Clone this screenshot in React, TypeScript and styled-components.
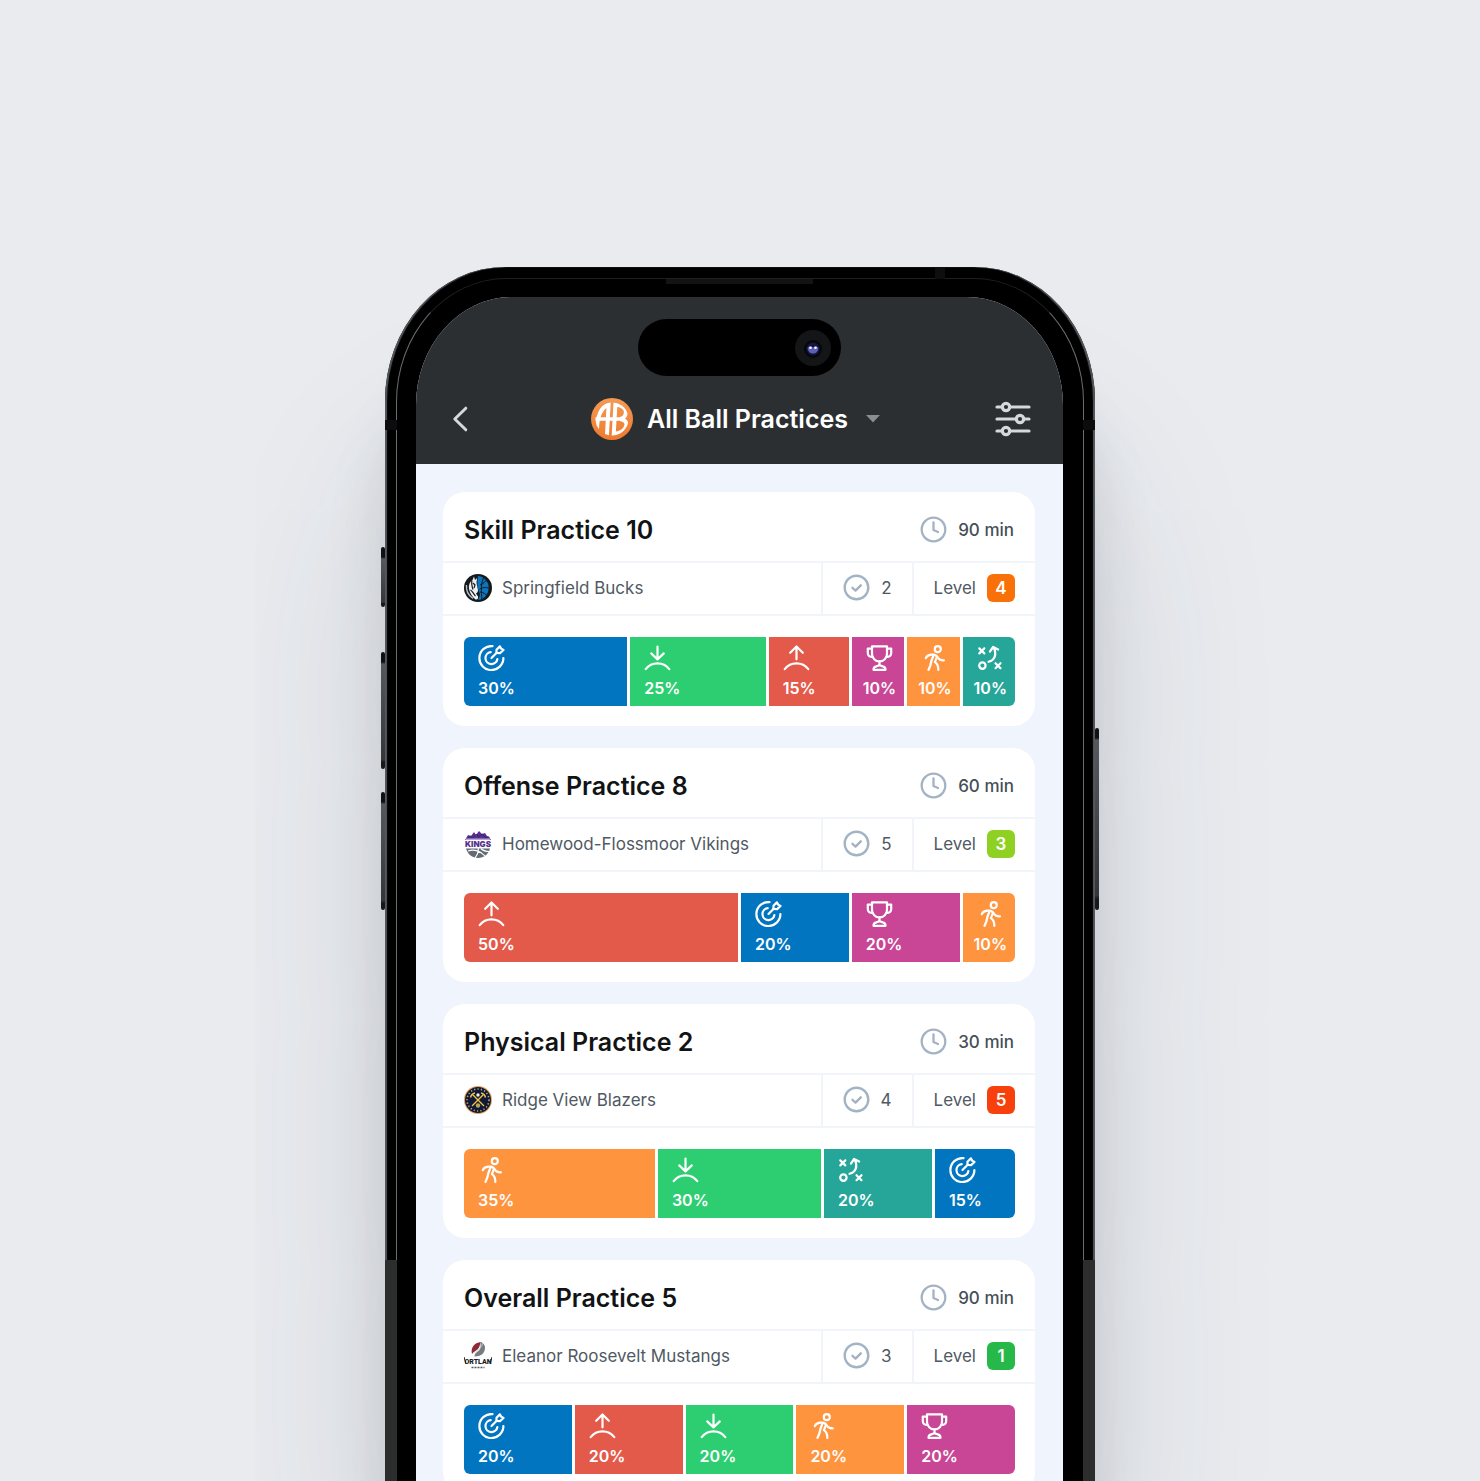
import React from "react";
import styled, { createGlobalStyle } from "styled-components";

const GlobalStyle = createGlobalStyle`
  *, *::before, *::after { box-sizing: border-box; }
  body {
    margin: 0;
    background: #e9ebef;
    font-family: Inter, Roboto, "Liberation Sans", sans-serif;
    -webkit-font-smoothing: antialiased;
  }
  h2, p, ul { margin: 0; padding: 0; }
`;

/* ---------- Device ---------- */

const Stage = styled.main`
  height: 100vh;
  overflow: hidden;
  display: flex;
  justify-content: center;
  align-items: flex-start;
  padding-top: 267px;
`;

const Phone = styled.div`
  position: relative;
  flex: 0 1 710px;
  padding: 30px 32px 300px 31px;
  background: #000;
  border-radius: 120px 120px 0 0 / 134px 134px 0 0;
  box-shadow:
    0 190px 190px rgba(40, 55, 70, 0.14),
    0 110px 60px -4px rgba(40, 50, 60, 0.17),
    inset 2px 0 1px #55585c,
    inset -2px 0 1px #55585c;

  &::before {
    content: "";
    position: absolute;
    inset: 11px 11px 0;
    border: 1px solid #6a6c70;
    border-top-color: #1f1f1f;
    border-bottom: 0;
    border-radius: 110px 110px 0 0 / 124px 124px 0 0;
  }
`;

const Rail = styled.span<{ $side: "left" | "right" }>`
  position: absolute;
  top: 993px;
  bottom: 0;
  ${(p) => p.$side}: 0;
  width: 12px;
  background: #2c2d2d;
`;

const Antenna = styled.span<{ $side: "left" | "right" }>`
  position: absolute;
  top: 153px;
  ${(p) => p.$side}: 0;
  width: 12px;
  height: 10px;
  background: #0c0c0c;
`;

const TopAntenna = styled.span`
  position: absolute;
  top: 0;
  right: 150px;
  width: 10px;
  height: 12px;
  background: #0e0e0e;
`;

const Speaker = styled.span`
  position: absolute;
  top: 12px;
  left: 281px;
  width: 147px;
  height: 5px;
  background: #131313;
`;

const SideKey = styled.span<{ $side: "left" | "right"; $top: number; $length: number }>`
  position: absolute;
  top: ${(p) => p.$top}px;
  ${(p) => p.$side}: -4px;
  width: 4px;
  height: ${(p) => p.$length}px;
  border-radius: 2px;
  background: linear-gradient(#111 0, #111 10px, #55595d 12px, #33373a 92%, #16181a 94%);
`;

const Screen = styled.div`
  position: relative;
  overflow: hidden;
  background: #f0f5fd;
  border-radius: 96px 96px 0 0 / 108px 108px 0 0;
`;

/* ---------- Header ---------- */

const Header = styled.header`
  display: flex;
  flex-direction: column;
  align-items: center;
  padding-top: 22px;
  background: #2b2f31;
`;

const Island = styled.div`
  display: flex;
  justify-content: flex-end;
  align-items: center;
  width: 203px;
  height: 57px;
  padding-right: 10px;
  border-radius: 29px;
  background: #000;
`;

const Nav = styled.nav`
  align-self: stretch;
  display: flex;
  align-items: center;
  justify-content: space-between;
  height: 88px;
  padding: 0 32px 2px 36px;
`;

const IconButton = styled.button`
  display: flex;
  padding: 0;
  border: 0;
  background: none;
  color: #d6d8d9;
  cursor: pointer;
`;

const Picker = styled.label`
  display: flex;
  align-items: center;
  gap: 14px;
  padding-left: 8px;
`;

const PickerSelect = styled.select`
  appearance: none;
  margin: 0;
  padding: 0 32px 0 0;
  border: 0;
  background: none;
  color: #fff;
  font: 600 25px/32px Inter, Roboto, sans-serif;
  cursor: pointer;
`;

const Caret = styled.svg`
  margin-left: -28px;
  pointer-events: none;
`;

/* ---------- Cards ---------- */

const CardList = styled.ul`
  display: flex;
  flex-direction: column;
  gap: 22px;
  padding: 28px 28px 28px 27px;
  list-style: none;
`;

const Card = styled.li`
  border-radius: 22px;
  background: #fff;
`;

const CardHead = styled.div`
  display: flex;
  justify-content: space-between;
  align-items: center;
  height: 69px;
  padding: 6px 21px 0;
`;

const CardTitle = styled.h2`
  color: #111315;
  font-size: 25px;
  line-height: 32px;
  font-weight: 600;
`;

const Duration = styled.p`
  display: flex;
  align-items: center;
  gap: 11px;
  color: #464f57;
  font-size: 17px;
  line-height: 24px;
  font-weight: 500;
`;

const Details = styled.div`
  display: flex;
  height: 55px;
  border: solid #f1f5f9;
  border-width: 2px 0;
  color: #4f5963;
  font-size: 17px;
  line-height: 24px;
`;

const Team = styled.div`
  flex: 1;
  display: flex;
  align-items: center;
  gap: 10px;
  padding: 0 0 2px 21px;
`;

const Stat = styled.div`
  display: flex;
  align-items: center;
  gap: 11px;
  padding: 0 20px 2px;
  border-left: 2px solid #f1f5f9;
`;

const LevelBadge = styled.span<{ $color: string }>`
  display: grid;
  place-items: center;
  width: 28px;
  height: 28px;
  border-radius: 6px;
  background: ${(p) => p.$color};
  color: #fff;
  font-weight: 600;
`;

const Breakdown = styled.div`
  display: flex;
  gap: 3px;
  height: 110px;
  padding: 21px 20px 20px 21px;
`;

const Segment = styled.div<{ $color: string; $narrow: boolean }>`
  flex: none;
  display: flex;
  flex-direction: column;
  gap: 5px;
  align-items: ${(p) => (p.$narrow ? "center" : "flex-start")};
  padding: ${(p) => (p.$narrow ? "8px 0 0 3px" : "8px 0 0 14px")};
  background: ${(p) => p.$color};
  color: #fff;
  font-size: 16px;
  line-height: 24px;
  font-weight: 600;

  &:first-child { border-radius: 6px 0 0 6px; }
  &:last-child { border-radius: 0 6px 6px 0; }
`;

/* ---------- Icons ---------- */

const ClockIcon = () => (
  <svg width="27" height="27" viewBox="0 0 27 27" fill="none" stroke="#a3b3c4" strokeWidth="2.3" strokeLinecap="round" strokeLinejoin="round" aria-hidden="true">
    <circle cx="13.5" cy="13.5" r="11.8" />
    <path d="M13.5 6.5v7.5l4.5 2" />
  </svg>
);

const CheckIcon = () => (
  <svg width="27" height="27" viewBox="0 0 27 27" fill="none" stroke="#a3b3c4" strokeWidth="2.4" strokeLinecap="round" strokeLinejoin="round" aria-hidden="true">
    <circle cx="13.5" cy="13.5" r="11.8" />
    <path d="M9.5 13.8l3 2.8 5.3-5.3" />
  </svg>
);

type Kind = "shooting" | "defense" | "offense" | "game" | "physical" | "tactics";

const glyphs: Record<Kind, React.ReactNode> = {
  shooting: (
    <>
      <path d="M14 1.1A12 12 0 1 0 24.9 13" />
      <path d="M12.2 7.1A6 6 0 1 0 18.9 14" />
      <path d="M13 13l5.2-5.2" />
      <path d="M18 8V4.8l3.4-3.4 1.2 2.2 2.4 1.3-3.5 3.3z" />
    </>
  ),
  defense: (
    <>
      <path d="M13 1.5v12.8M6.7 8.4l6.3 6 6.3-6" />
      <path d="M1.2 24.2a14.8 14.8 0 0 1 23.6 0" />
    </>
  ),
  offense: (
    <>
      <path d="M13 14.3V1.7M6.7 7.8l6.3-6.3 6.3 6.3" />
      <path d="M1.2 24.2a14.8 14.8 0 0 1 23.6 0" />
    </>
  ),
  game: (
    <>
      <path d="M5.5 1.3h15v7.6a7.5 7.5 0 0 1-15 0z" />
      <path d="M5.5 3.6H1.3V8c0 2.6 2 4 4.9 4M20.5 3.6h4.2V8c0 2.6-2 4-4.9 4" />
      <path d="M13 16.6v3.2" />
      <path d="M7 24.8c0-2 .9-3 2.7-3.4l3.3-1.2 3.3 1.2c1.8.4 2.7 1.4 2.7 3.4z" />
    </>
  ),
  physical: (
    <>
      <circle cx="16.3" cy="4.2" r="3" />
      <path d="M4.3 13.2c1-2.4 2.8-3.2 5.3-3.5 3.7-.5 5.2.2 6.4 2.4 1 2 2.2 3.4 6.4 3.3" />
      <path d="M12.2 9.8L9.9 16c-.5 3.3-1.3 6-2.9 8.9" />
      <path d="M15.4 12.2l-2 5c2.6 1.7 3.5 3.6 3.4 7.7" />
    </>
  ),
  tactics: (
    <>
      <path d="M1.8 3.4l5 5M6.8 3.4l-5 5M18 18.2l5 5M23 18.2l-5 5" />
      <circle cx="4.9" cy="20.6" r="3.2" />
      <path d="M11 16.8c6.4-1.4 8.6-7.6 5-14.6M12.4 6.6L15.6 2l5 2.5" />
    </>
  ),
};

const GlyphIcon = ({ kind }: { kind: Kind }) => (
  <svg width="27" height="26" viewBox="0 0 26 26" fill="none" stroke="#fff" strokeWidth="2.2" strokeLinecap="round" strokeLinejoin="round" aria-hidden="true">
    {glyphs[kind]}
  </svg>
);

const BrandLogo = () => (
  <svg width="42" height="42" viewBox="0 0 42 42" aria-hidden="true">
    <defs>
      <linearGradient id="brand" x1="0" y1="0" x2="0" y2="1">
        <stop offset="0" stopColor="#f39a57" />
        <stop offset="1" stopColor="#f07a2c" />
      </linearGradient>
      <clipPath id="brandBall"><circle cx="21" cy="21" r="16.6" /></clipPath>
    </defs>
    <circle cx="21" cy="21" r="21" fill="url(#brand)" />
    <g clipPath="url(#brandBall)" fill="none" stroke="#fff" strokeWidth="4">
      <path d="M6 32C6 19 10 9 17.6 6.5L15.8 40" />
      <path d="M4 21h27" strokeWidth="3.4" />
      <path d="M22.5 40L24.4 6.500C31 7 35.500 10.500 34.800 15c-.5 3.500-2.600 5.500-5.600 6 4.600.8 7 3.200 6 7-1.200 4.500-6 7.500-13 7.700" />
    </g>
  </svg>
);

const BackIcon = () => (
  <svg width="16" height="28" viewBox="0 0 16 28" fill="none" stroke="currentColor" strokeWidth="3" strokeLinecap="round" strokeLinejoin="round" aria-hidden="true">
    <path d="M13.8 3.2L2.8 14l11 10.8" />
  </svg>
);

const FilterIcon = () => (
  <svg width="36" height="36" viewBox="0 0 36 36" fill="none" stroke="currentColor" strokeWidth="3.2" strokeLinecap="round" aria-hidden="true">
    <path d="M2 6h4M16 6h18M2 18h19M30 18h4M2 30h4M16 30h18" />
    <circle cx="11" cy="6" r="3.7" />
    <circle cx="25" cy="18" r="3.7" />
    <circle cx="11" cy="30" r="3.7" />
  </svg>
);

const Camera = () => (
  <svg width="36" height="36" viewBox="0 0 36 36" aria-hidden="true">
    <circle cx="18" cy="18" r="18" fill="#141517" />
    <circle cx="18" cy="19" r="9" fill="#07080f" />
    <circle cx="18" cy="19" r="6.5" fill="#15163a" />
    <path d="M12.5 18.5c1-2.5 3.5-2.5 5.5-1 2-1.5 4.5-1.5 5.5 1-.6 3-2.6 5-5.5 5s-4.900-2-5.500-5z" fill="#5c60b4" />
    <circle cx="15.5" cy="17.8" r="1.3" fill="#fff" />
    <circle cx="20.5" cy="17.8" r="1.3" fill="#fff" />
  </svg>
);

type TeamKey = "bucks" | "vikings" | "blazers" | "mustangs";

const crests: Record<TeamKey, React.ReactNode> = {
  bucks: (
    <>
      <circle cx="14" cy="14" r="14" fill="#15191c" />
      <path d="M14 1.8a12.3 12.3 0 0 1 0 24.4c1-3 3-5 1-9s-2-9-1-15.400z" fill="#0b75bd" />
      <path d="M16 11c3-1 6-4 7-6M15.5 15c4-2 8-2 11 0M16 18c3 0 6 2 7.5 5M20 2.5c-3 6-3 15-2 23" fill="none" stroke="#15191c" strokeWidth="1" />
      <path d="M10 2.5L8.5 6c-3 2-4 5-3.5 9 1 4 3 8 6.5 10.5 2 .3 3-1 2.5-3l-2-3c2-1 2.5-3 1.5-5.5L12.5 9l.5-5-2 2z" fill="#eef1f3" />
      <path d="M9 9l2 2-1 3M6.5 16c2 1 3 4 5 6M8 6.5c-1 3 0 6 1 9" fill="none" stroke="#15191c" strokeWidth="1.2" />
      <path d="M2.5 11c-.5 5 2 10.5 6.5 13.5" fill="none" stroke="#b9c2c9" strokeWidth="1.4" />
    </>
  ),
  vikings: (
    <>
      <path d="M1 10l3-5 3 1 3-4 2 3 3-4 3 3 3-1 2 3 2 .5 2 3.5z" fill="#57308f" />
      <path d="M3.5 8.5l3-2.5 2 2 4-4 2 3 4-3 2 3 3 1" fill="none" stroke="#3d1f70" strokeWidth="1" />
      <rect x="2" y="8.5" width="24" height="1.5" fill="#b9a8d6" />
      <text x="14" y="17" textAnchor="middle" fontFamily="Inter, sans-serif" fontSize="8" fontWeight="900" fill="#57308f">KINGS</text>
      <path d="M2 18.5h24C24 24.5 20 28 14 28S4 24.5 2 18.5z" fill="#636c75" />
      <path d="M4 21c6-2 13 0 17 5M14 18c1 3 0 6-3 10M17 18.5c2 2 5 3 8 3" fill="none" stroke="#fff" strokeWidth="1.2" />
    </>
  ),
  blazers: (
    <>
      <circle cx="14" cy="14" r="14" fill="#e9a05a" />
      <circle cx="14" cy="14" r="13" fill="#111a33" />
      <circle cx="14" cy="14" r="11" fill="none" stroke="#b9a98d" strokeWidth="1.6" strokeDasharray="1.2 2.2" />
      <circle cx="14" cy="14" r="8.5" fill="#111a33" />
      <path d="M8 20L19.5 8.5M20 20L8.5 8.5" stroke="#f2c14a" strokeWidth="1.4" />
      <path d="M6.5 11.5c.5-2.5 2-4 4.5-4.5M21.5 11.5c-.5-2.5-2-4-4.5-4.5" fill="none" stroke="#f2c14a" strokeWidth="1.5" />
      <circle cx="14" cy="9" r="1.7" fill="#f4eedd" />
      <circle cx="14" cy="19.5" r="2.2" fill="#b8a65a" />
    </>
  ),
  mustangs: (
    <>
      <path d="M8 12C6.500 6 10 .5 17 0c-1.500 3-1 5-3.500 7.500-2 1.500-4 2.500-5.500 4.500z" fill="#8e2936" />
      <path d="M17 0c5 2 5 8 2 11.500-2 2-4.500 3-8.500 3 0-3 2.500-4.500 4.500-6C17.500 6 16 3 17 0z" fill="#777c80" />
      <path d="M9 11c4-1 8-5 10-10" fill="none" stroke="#d5d7d9" strokeWidth=".8" />
      <text x="14" y="22" textAnchor="middle" fontFamily="Roboto, sans-serif" fontSize="7" fontWeight="900" fill="#1a1d1f">ORTLAN</text>
      <path d="M0 15l2 7M28 15l-2 7" stroke="#1a1d1f" strokeWidth="1" />
      <path d="M7.5 25.5h13" stroke="#55595c" strokeWidth="1.4" strokeDasharray="2 1" />
    </>
  ),
};

const Crest = ({ team }: { team: TeamKey }) => (
  <svg width="28" height="28" viewBox="0 0 28 28" aria-hidden="true">{crests[team]}</svg>
);

/* ---------- Data ---------- */

const kindColor: Record<Kind, string> = {
  shooting: "#0275c1",
  defense: "#2dce71",
  offense: "#e35a4b",
  game: "#c84695",
  physical: "#ff943f",
  tactics: "#26a699",
};

interface Practice {
  title: string;
  minutes: number;
  team: string;
  crest: TeamKey;
  checks: number;
  level: number;
  levelColor: string;
  parts: [Kind, number][];
}

const practices: Practice[] = [
  {
    title: "Skill Practice 10", minutes: 90, team: "Springfield Bucks", crest: "bucks", checks: 2, level: 4, levelColor: "#f97009",
    parts: [["shooting", 30], ["defense", 25], ["offense", 15], ["game", 10], ["physical", 10], ["tactics", 10]],
  },
  {
    title: "Offense Practice 8", minutes: 60, team: "Homewood-Flossmoor Vikings", crest: "vikings", checks: 5, level: 3, levelColor: "#8fd122",
    parts: [["offense", 50], ["shooting", 20], ["game", 20], ["physical", 10]],
  },
  {
    title: "Physical Practice 2", minutes: 30, team: "Ridge View Blazers", crest: "blazers", checks: 4, level: 5, levelColor: "#f8400d",
    parts: [["physical", 35], ["defense", 30], ["tactics", 20], ["shooting", 15]],
  },
  {
    title: "Overall Practice 5", minutes: 90, team: "Eleanor Roosevelt Mustangs", crest: "mustangs", checks: 3, level: 1, levelColor: "#27b84a",
    parts: [["shooting", 20], ["offense", 20], ["defense", 20], ["physical", 20], ["game", 20]],
  },
];

const PracticeCard = ({ practice }: { practice: Practice }) => (
  <Card>
    <CardHead>
      <CardTitle>{practice.title}</CardTitle>
      <Duration><ClockIcon />{practice.minutes} min</Duration>
    </CardHead>
    <Details>
      <Team><Crest team={practice.crest} />{practice.team}</Team>
      <Stat><CheckIcon />{practice.checks}</Stat>
      <Stat>Level<LevelBadge $color={practice.levelColor}>{practice.level}</LevelBadge></Stat>
    </Details>
    <Breakdown>
      {practice.parts.map(([kind, share]) => (
        <Segment
          key={kind}
          $color={kindColor[kind]}
          $narrow={share <= 10}
          style={{ width: `calc((100% + 3px) * ${share / 100} - 3px)` }}
        >
          <GlyphIcon kind={kind} />
          {share}%
        </Segment>
      ))}
    </Breakdown>
  </Card>
);

export default function App() {
  return (
    <>
      <GlobalStyle />
      <Stage>
        <Phone>
          <Rail $side="left" />
          <Rail $side="right" />
          <Antenna $side="left" />
          <Antenna $side="right" />
          <TopAntenna />
          <Speaker />
          <SideKey $side="left" $top={280} $length={60} />
          <SideKey $side="left" $top={385} $length={117} />
          <SideKey $side="left" $top={525} $length={118} />
          <SideKey $side="right" $top={461} $length={182} />
          <Screen>
            <Header>
              <Island><Camera /></Island>
              <Nav>
                <IconButton type="button" aria-label="Back"><BackIcon /></IconButton>
                <Picker>
                  <BrandLogo />
                  <PickerSelect aria-label="Practice list">
                    <option>All Ball Practices</option>
                  </PickerSelect>
                  <Caret width="14" height="8" viewBox="0 0 14 8" aria-hidden="true">
                    <path d="M0 0h14L7 7.5z" fill="#8b8e90" />
                  </Caret>
                </Picker>
                <IconButton type="button" aria-label="Filters"><FilterIcon /></IconButton>
              </Nav>
            </Header>
            <CardList>
              {practices.map((practice) => (
                <PracticeCard key={practice.title} practice={practice} />
              ))}
            </CardList>
          </Screen>
        </Phone>
      </Stage>
    </>
  );
}
